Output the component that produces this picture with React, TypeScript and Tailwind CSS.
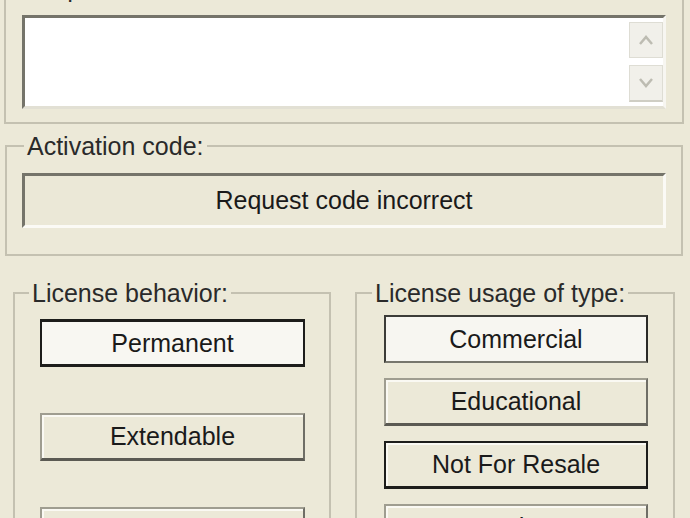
import React from "react";

type Kind = "checked" | "checkedSoft" | "normal" | "focus";
type Btn = { label: string; kind: Kind };

const behavior: Btn[] = [
  { label: "Permanent", kind: "checked" },
  { label: "Extendable", kind: "normal" },
  { label: "Limited Time", kind: "normal" },
];

const usage: Btn[] = [
  { label: "Commercial", kind: "checkedSoft" },
  { label: "Educational", kind: "normal" },
  { label: "Not For Resale", kind: "focus" },
  { label: "Student", kind: "normal" },
];

const btnStyles: Record<Kind, string> = {
  checked: "border-2 border-t-[3px] border-b-[3px] border-[#1d1d1b] bg-[#f8f7f2]",
  checkedSoft:
    "border-2 border-t-[#3c3c38] border-l-[#3c3c38] border-r-[#2a2a27] border-b-[#77766d] bg-[#f7f6f1]",
  normal:
    "border-2 border-t-[#9f9d90] border-l-[#9f9d90] border-r-[#6f6e66] border-b-[3px] border-b-[#5b5a53] bg-[#ece9d8] shadow-[inset_2px_2px_0_#faf9f3]",
  focus: "border-2 border-b-[3px] border-[#1d1d1b] bg-[#ece9d8] shadow-[inset_2px_2px_0_#faf9f3]",
};

function Chevron({ up }: { up?: boolean }) {
  return (
    <svg width="16" height="12" viewBox="0 0 16 12" fill="none">
      <polyline
        points={up ? "2,10 8,3 14,10" : "2,2 8,9 14,2"}
        stroke="#bdbcb2"
        strokeWidth="2.5"
      />
    </svg>
  );
}

function ToggleButton({ btn, width }: { btn: Btn; width: string }) {
  return (
    <div className={`${width} h-[48px] flex items-center justify-center text-[#1a1a1a] ${btnStyles[btn.kind]}`}>
      {btn.label}
    </div>
  );
}

export default function App() {
  return (
    <div className="w-[690px] h-[518px] overflow-hidden bg-[#ece9d8] font-['Liberation_Sans',Arial,sans-serif] text-[25px] leading-none text-[#1a1a1a]">
      <div className="flex flex-col">
        {/* request code */}
        <fieldset className="mt-[-26px] ml-[4px] w-[680px] h-[150px] px-[16px] pt-[13px] border-2 border-[#c4c1b1] min-w-0">
          <legend className="ml-[2px] px-[3px] leading-[28px] text-[#2a2a2a]">Request code:</legend>
          <div className="h-[94px] flex bg-white border-[3px] border-t-[#75746a] border-l-[#75746a] border-r-[#f7f6f1] border-b-[#e2e0d4]">
            <div className="flex-1" />
            <div className="w-[34px] flex flex-col pt-[4px] gap-[7px]">
              <div className="h-[36px] flex items-center justify-center bg-[#f1f0ea] border border-[#deddd4]">
                <Chevron up />
              </div>
              <div className="h-[37px] flex items-center justify-center bg-[#f1f0ea] border border-[#deddd4] border-b-2 border-b-[#cfcec4]">
                <Chevron />
              </div>
            </div>
          </div>
        </fieldset>

        {/* activation code */}
        <fieldset className="mt-[8px] ml-[5px] w-[678px] h-[124px] px-[15px] pt-[13px] border-2 border-[#c4c1b1] min-w-0">
          <legend className="ml-[2px] px-[3px] leading-[28px] text-[#2a2a2a]">Activation code:</legend>
          <div className="h-[55px] flex items-center justify-center bg-[#ebe8d7] border-[3px] border-t-[#75746a] border-l-[#75746a] border-r-[#fbfaf5] border-b-[#fbfaf5]">
            Request code incorrect
          </div>
        </fieldset>

        <div className="mt-[23px] flex items-start">
          <fieldset className="ml-[13px] w-[318px] h-[260px] pl-[12px] pt-[12px] border-2 border-[#c4c1b1] min-w-0">
            <legend className="ml-[2px] px-[3px] leading-[28px] text-[#2a2a2a]">License behavior:</legend>
            <div className="ml-[13px] flex flex-col gap-[46px]">
              {behavior.map((b) => (
                <ToggleButton key={b.label} btn={b} width="w-[265px]" />
              ))}
            </div>
          </fieldset>

          <fieldset className="ml-[24px] w-[320px] h-[260px] pl-[13px] pt-[8px] border-2 border-[#c4c1b1] min-w-0">
            <legend className="ml-[2px] px-[3px] leading-[28px] text-[#2a2a2a]">License usage of type:</legend>
            <div className="ml-[14px] flex flex-col gap-[15px]">
              {usage.map((b) => (
                <ToggleButton key={b.label} btn={b} width="w-[264px]" />
              ))}
            </div>
          </fieldset>
        </div>
      </div>
    </div>
  );
}
